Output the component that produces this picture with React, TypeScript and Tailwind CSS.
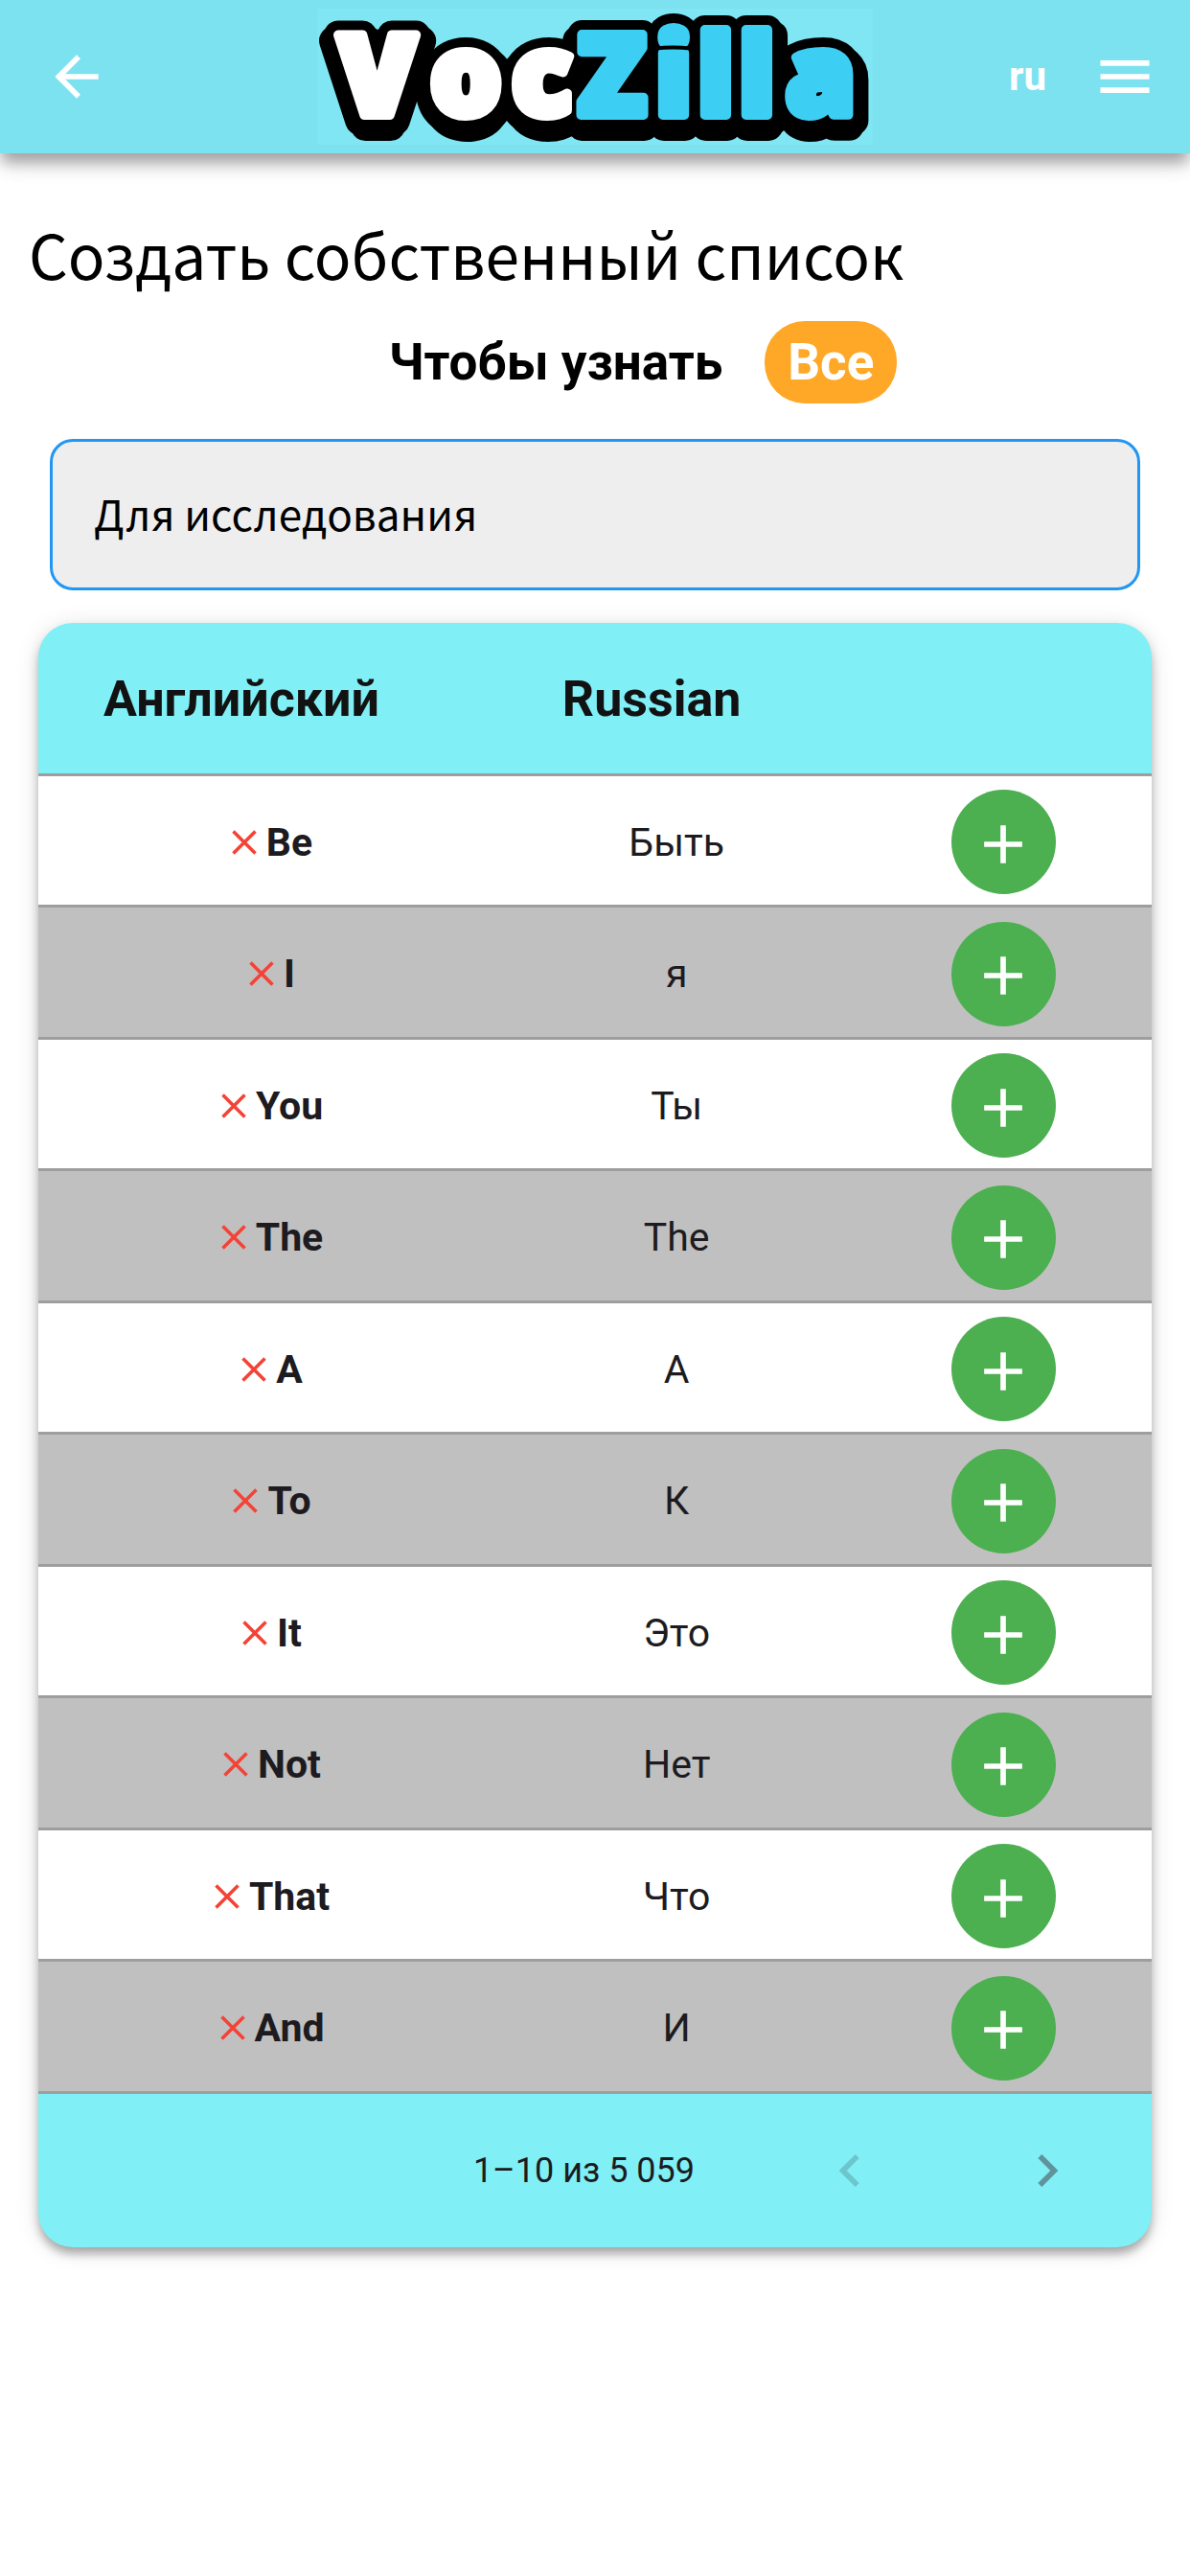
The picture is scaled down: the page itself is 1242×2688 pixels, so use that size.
import { MdAdd, MdArrowBack, MdChevronLeft, MdChevronRight, MdMenu } from "react-icons/md";

const words = [
  { en: "Be", ru: "Быть" },
  { en: "I", ru: "я" },
  { en: "You", ru: "Ты" },
  { en: "The", ru: "The" },
  { en: "A", ru: "А" },
  { en: "To", ru: "К" },
  { en: "It", ru: "Это" },
  { en: "Not", ru: "Нет" },
  { en: "That", ru: "Что" },
  { en: "And", ru: "И" },
];

function Logo() {
  const font = "font-['Open_Sans',sans-serif] text-[117px] font-extrabold";
  const first = "22 118 203";
  const second = "272 353 397 440 489";
  return (
    <svg
      viewBox="0 0 580 142"
      className="h-[142px] w-[580px] overflow-visible bg-[#80e6f3]"
      role="img"
      aria-label="VocZilla"
    >
      <g
        className="fill-black stroke-black [filter:drop-shadow(-5px_6px_0_#000)_drop-shadow(6px_6px_0_#000)]"
        strokeWidth="30"
        strokeLinejoin="round"
      >
        <text className={font} x={first} y="111">Voc</text>
        <text className={font} x={second} y="111">Zilla</text>
      </g>
      <g strokeWidth="10" strokeLinejoin="round">
        <text className={`${font} fill-white stroke-white`} x={first} y="111">Voc</text>
        <text className={`${font} fill-[#3dcef3] stroke-[#3dcef3]`} x={second} y="111">Zilla</text>
      </g>
      <path d="M353 41.5Q371 39.5 390 41.5" className="fill-none stroke-black" strokeWidth="4" />
    </svg>
  );
}

function Cross() {
  return (
    <svg viewBox="0 0 26 26" className="size-[26px] shrink-0" aria-hidden="true">
      <path d="M1.5 1.5 24.5 24.5M24.5 1.5 1.5 24.5" stroke="#f44336" strokeWidth="3.6" fill="none" />
    </svg>
  );
}

export default function App() {
  return (
    <div className="min-h-screen bg-white font-[Roboto,sans-serif] text-black">
      <header className="relative grid h-40 grid-cols-[1fr_auto_1fr] items-center bg-[#7de2f0] text-white shadow-[0_12px_12px_-3px_rgba(0,0,0,0.2),0_12px_18px_rgba(0,0,0,0.14),0_3px_30px_rgba(0,0,0,0.12)]">
        <button type="button" aria-label="Назад" className="ml-[46px] w-[68px]">
          <MdArrowBack className="size-[68px]" />
        </button>
        <Logo />
        <div className="mr-[34px] flex items-center justify-end gap-12">
          <button type="button" className="text-[42px] leading-[48px] font-bold">ru</button>
          <button type="button" aria-label="Меню">
            <MdMenu className="size-[68px]" />
          </button>
        </div>
      </header>

      <main className="px-10 pt-14">
        <h1 className="-ml-2.5 font-['Noto_Sans_CJK_SC',sans-serif] text-[64px] leading-[96px]">
          Создать собственный список
        </h1>

        <div className="mt-[23px] ml-[100px] flex items-center justify-center gap-11 text-[53px] leading-[86px] font-bold">
          <span>Чтобы узнать</span>
          <button type="button" className="rounded-[42px] bg-[#ffa726] px-6 text-white">Все</button>
        </div>

        <input
          type="text"
          aria-label="Для исследования"
          placeholder="Для исследования"
          className="mx-3 mt-[37px] block h-[158px] w-[calc(100%-24px)] rounded-[24px] border-3 border-[#2196f3] bg-[#eeeeee] px-[43px] pb-1 font-['Noto_Sans_CJK_SC',sans-serif] text-[44px] outline-none placeholder:text-black placeholder:opacity-100"
        />

        <section className="mt-[34px] overflow-hidden rounded-[36px] bg-[#80eff6] shadow-[0_8px_10px_-2px_rgba(0,0,0,0.2),0_6px_12px_rgba(0,0,0,0.14),0_3px_24px_rgba(0,0,0,0.12)]">
          <table className="w-full table-fixed border-collapse text-center">
            <colgroup>
              <col className="w-[42%]" />
              <col className="w-[31%]" />
              <col className="w-[27%]" />
            </colgroup>
            <thead>
              <tr className="h-[158px] border-b-3 border-[#9e9e9e] text-[52px] leading-[60px] text-[#121212]">
                <th scope="col" className="pt-1 pr-16 font-bold">Английский</th>
                <th scope="col" className="pt-1 pr-14 font-bold">Russian</th>
                <td />
              </tr>
            </thead>
            <tbody className="text-[41px] leading-[48px] text-[#1d1b20]">
              {words.map((word) => (
                <tr
                  key={word.en}
                  className="h-[137px] border-b-3 border-[#9e9e9e] bg-white even:h-[138px] even:bg-[#c0c0c0]"
                >
                  <td className="p-0 pt-1">
                    <span className="flex items-center justify-center gap-2.5 font-bold">
                      <Cross />
                      {word.en}
                    </span>
                  </td>
                  <td className="p-0 pt-1 pr-1">{word.ru}</td>
                  <td className="p-0 pt-1 pl-1">
                    <button
                      type="button"
                      aria-label={`Добавить ${word.en}`}
                      className="mx-auto flex size-[109px] items-center justify-center rounded-full bg-[#4caf50] pt-1 text-white"
                    >
                      <MdAdd className="size-[68px]" />
                    </button>
                  </td>
                </tr>
              ))}
            </tbody>
          </table>
          <footer className="flex h-40 items-center justify-end pr-[75px] text-[#1d1b20]">
            <span className="mr-32 text-[36px] leading-[42px]">1–10 из 5 059</span>
            <button type="button" disabled aria-label="Предыдущая страница" className="mr-[138px] text-[#6cc6cc]">
              <MdChevronLeft className="size-[68px]" />
            </button>
            <button type="button" aria-label="Следующая страница" className="text-[#62929a]">
              <MdChevronRight className="size-[68px]" />
            </button>
          </footer>
        </section>
      </main>
    </div>
  );
}
